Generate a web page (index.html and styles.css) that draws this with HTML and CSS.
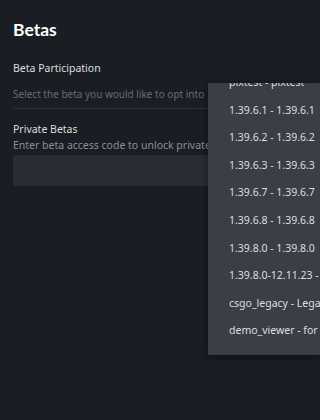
FILE: index.html
```html
<!DOCTYPE html>
<html>
<head>
    <title>Betas</title>
    <link rel="stylesheet" href="styles.css">
</head>
<body>
    <div class="page">
        <h1>Betas</h1>
        <div class="field">
            <div class="label">Beta Participation</div>
            <div class="select">Select the beta you would like to opt into</div>
        </div>
        <div class="field private">
            <div class="label">Private Betas</div>
            <div class="desc">Enter beta access code to unlock private betas</div>
            <input type="text" class="code-input">
        </div>
    </div>

    <!-- dropdown menu, scrolled a little -->
    <div class="dropdown">
        <ul class="beta-list">
            <li>pixtest - pixtest</li>
            <li>1.39.6.1 - 1.39.6.1</li>
            <li>1.39.6.2 - 1.39.6.2</li>
            <li>1.39.6.3 - 1.39.6.3</li>
            <li>1.39.6.7 - 1.39.6.7</li>
            <li>1.39.6.8 - 1.39.6.8</li>
            <li>1.39.8.0 - 1.39.8.0</li>
            <li>1.39.8.0-12.11.23 - 1.39.8.0</li>
            <li>csgo_legacy - Legacy Version of CS:GO</li>
            <li>demo_viewer - for viewing demos</li>
        </ul>
    </div>
</body>
</html>
```

FILE: styles.css
```css
body {
    margin: 0;
    background-color: #1a1d23;
    font-family: "Noto Sans", "Open Sans", sans-serif;
    color: #dcdedf;
    overflow: hidden;
}
.page {
    padding: 18px 13px 0 13px;
}
h1 {
    margin: 0 0 18px 0;
    font-family: Lato, "Noto Sans", sans-serif;
    font-size: 17.5px;
    line-height: 24px;
    font-weight: bold;
    color: #ffffff;
}
.label {
    font-size: 10.5px;
    line-height: 16px;
    color: #dcdedf;
}
.select {
    margin-top: 11px;
    padding-bottom: 7px;
    font-size: 10px;
    line-height: 14px;
    color: #676c74;
    border-bottom: 1px solid #2c2f36;
}
.private {
    margin-top: 12px;
}
.desc {
    font-size: 10.5px;
    line-height: 16px;
    color: #8b9098;
    white-space: nowrap;
}
.code-input {
    display: block;
    box-sizing: border-box;
    width: 100%;
    height: 31px;
    margin-top: 2px;
    background-color: #2a2d34;
    border: none;
    border-radius: 2px;
}
.dropdown {
    position: absolute;
    left: 208px;
    top: 83px;
    width: 112px;
    height: 272px;
    overflow: hidden;
    background-color: #3b3e46;
    box-shadow: 0 2px 8px rgba(0, 0, 0, 0.5);
}
.beta-list {
    list-style: none;
    margin: -14px 0 0 0;
    padding: 0;
}
.beta-list li {
    height: 27.6px;
    line-height: 27.6px;
    padding-left: 21px;
    font-size: 10.5px;
    color: #dcdedf;
    white-space: nowrap;
}
```
